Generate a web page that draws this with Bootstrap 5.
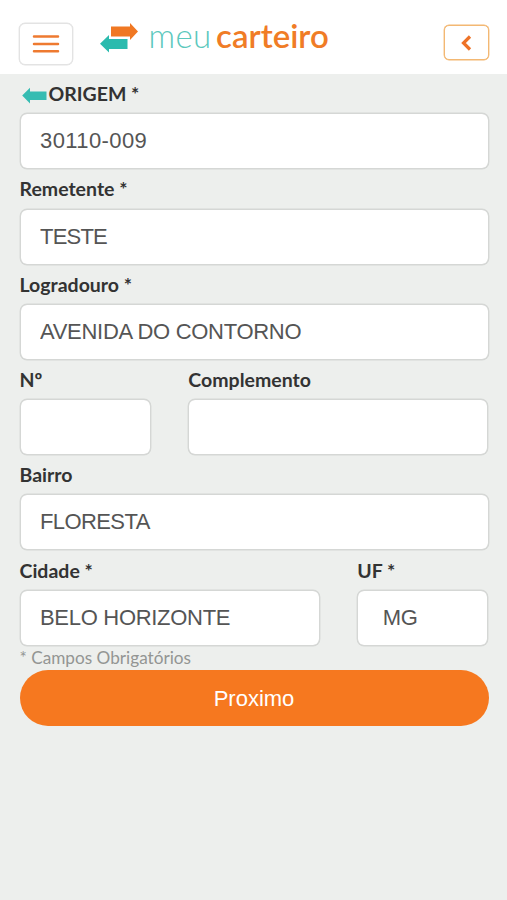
<!DOCTYPE html>
<html lang="pt-BR">
<head>
<meta charset="utf-8">
<meta name="viewport" content="width=device-width, initial-scale=1">
<title>Meu Carteiro</title>
<link href="https://cdn.jsdelivr.net/npm/bootstrap@5.3.0/dist/css/bootstrap.min.css" rel="stylesheet">
<style>
body{background:#edefed;font-family:Lato,sans-serif;color:#333;min-height:100vh}
.topbar{height:74px;background:#fff;padding:0 18.5px 0 19px}
.btn-menu{width:54px;height:42px;margin-top:13px;border:1.5px solid #e3e3e3;box-shadow:0 0 0 .4px #e3e3e3;border-radius:6px;background:#fff}
.btn-back{width:44.5px;height:34.5px;margin-top:11px;border:1.5px solid #f3b873;box-shadow:0 0 0 .4px #f3b873;border-radius:5px;background:#fff}
.logo-arrows{margin:2px 0 0 27px}
.logo-text{font-size:33px;line-height:40px;margin:-4px 0 0 9.5px}
.logo-meu{color:#5cc8bd;font-weight:300;margin-right:4.5px;letter-spacing:.4px}
.logo-carteiro{color:#f07c26;font-weight:600}
.page-form{padding:0 18.5px 0 19.5px}
.form-grid{--bs-gutter-x:37.5px}
.field-label{height:39.3px;line-height:24px;padding-top:8.2px;font-size:19.5px;font-weight:700;white-space:nowrap}
.field-box{height:56px;padding:0 19.5px;border:1.5px solid #d5d7d5;box-shadow:0 0 0 .4px #d5d7d5;border-radius:7px;font-family:"Liberation Sans",Arial,sans-serif;font-size:22px;letter-spacing:-.3px;color:#555}
.field-box.cep{letter-spacing:.4px}
.field-box.teste{letter-spacing:-.8px}
.field-box.floresta{letter-spacing:-.6px}
.field-box.uf{padding-left:24.5px}
.hint{font-size:17.2px;line-height:24px;height:24.6px;padding-top:.5px;color:#939593}
.btn-next{height:56px;border-radius:28px;background:#f6781f;color:#fff;font-family:"Liberation Sans",Arial,sans-serif;font-size:22px}
</style>
</head>
<body>
<header class="topbar d-flex align-items-center">
  <button class="btn-menu p-0 d-flex align-items-center justify-content-center" type="button" aria-label="Menu">
    <svg width="28" height="20" viewBox="0 0 28 20" stroke="#ee7a30" stroke-width="2.5" stroke-linecap="round"><path d="M2 2.500H26M2 10H26M2 17.300H26"/></svg>
  </button>
  <svg class="logo-arrows" width="39" height="32" viewBox="0 0 39 32"><path fill="#f07823" d="M11 4.500H30V1L38 9.500L30 18V14.500H11Z"/><path fill="#2bbbae" d="M27.500 17H9V13L0 21.800L9 30.500V27H27.500Z"/></svg>
  <div class="logo-text text-nowrap"><span class="logo-meu">meu</span><span class="logo-carteiro">carteiro</span></div>
  <button class="btn-back ms-auto p-0 d-flex align-items-center justify-content-center" type="button" aria-label="Voltar">
    <svg width="12" height="18" viewBox="0 0 12 18" fill="none" stroke="#ee7328" stroke-width="3.200"><path d="M10 2.500L3.500 9L10 15.500"/></svg>
  </button>
</header>
<main class="page-form">
  <form>
    <div class="row form-grid">
      <div class="col-12">
        <label class="field-label d-flex" for="cep"><svg class="flex-shrink-0" width="29" height="28" viewBox="0 0 29 28"><path fill="#36bcb2" d="M2.200 13.500L10 5.800V9.500H26.500V18H10V21.500Z"/></svg>ORIGEM *</label>
        <input class="field-box cep form-control" id="cep" value="30110-009">
      </div>
      <div class="col-12">
        <label class="field-label d-block" for="rem">Remetente *</label>
        <input class="field-box teste form-control" id="rem" value="TESTE">
      </div>
      <div class="col-12">
        <label class="field-label d-block" for="log">Logradouro *</label>
        <input class="field-box form-control" id="log" value="AVENIDA DO CONTORNO">
      </div>
      <div class="col-4">
        <label class="field-label d-block" for="num">Nº</label>
        <input class="field-box form-control" id="num">
      </div>
      <div class="col-8">
        <label class="field-label d-block" for="comp">Complemento</label>
        <input class="field-box form-control" id="comp">
      </div>
      <div class="col-12">
        <label class="field-label d-block" for="bairro">Bairro</label>
        <input class="field-box floresta form-control" id="bairro" value="FLORESTA">
      </div>
      <div class="col-8">
        <label class="field-label d-block" for="cidade">Cidade *</label>
        <input class="field-box form-control" id="cidade" value="BELO HORIZONTE">
      </div>
      <div class="col-4">
        <label class="field-label d-block" for="uf">UF *</label>
        <input class="field-box uf form-control" id="uf" value="MG">
      </div>
    </div>
    <div class="hint">* Campos Obrigatórios</div>
    <button class="btn-next btn w-100 p-0 border-0" type="button">Proximo</button>
  </form>
</main>
<script src="https://cdn.jsdelivr.net/npm/bootstrap@5.3.0/dist/js/bootstrap.bundle.min.js"></script>
</body>
</html>
